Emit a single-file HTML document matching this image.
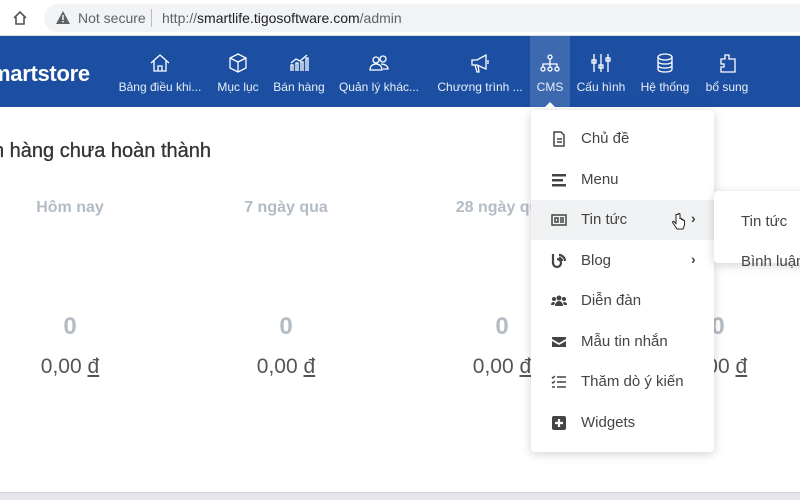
<!DOCTYPE html>
<html><head><meta charset="utf-8"><style>
*{margin:0;padding:0;box-sizing:border-box}
body{width:800px;height:500px;overflow:hidden;background:#fff;font-family:"Liberation Sans","DejaVu Sans",sans-serif;position:relative}
.top{position:absolute;left:0;top:0;width:800px;height:36px;background:#fff;border-bottom:1px solid #dadce0}
.pill{position:absolute;left:44px;top:4px;width:770px;height:28px;background:#f1f3f4;border-radius:14px}
.nav{position:absolute;left:0;top:36px;width:800px;height:71px;background:#1c4fa1;color:#fff}
.logo{position:absolute;left:-9px;top:25px;font-size:22px;font-weight:bold;letter-spacing:-.3px}
.it{position:absolute;top:0;height:71px;text-align:center;font-size:12px;color:#e8eef8}
.it svg{display:block;margin:16px auto 6px;width:22px;height:22px}
.it span{white-space:nowrap}
.active{background:#3d69b0}
.title{position:absolute;left:-7px;top:140px;font-size:20px;color:#333;-webkit-text-stroke:.3px #333}
.col{position:absolute;width:160px;text-align:center}
.lab{top:199px;font-size:16px;font-weight:bold;color:#b3bcc5}
.z{top:313px;font-size:24px;font-weight:bold;color:#b3bcc5}
.m{top:355px;font-size:21px;color:#555}
.m u{text-decoration:underline}
.menu{position:absolute;left:531px;top:110px;width:183px;height:342px;background:#fff;border-radius:4px;box-shadow:0 2px 10px rgba(0,0,0,.18)}
.mi{position:absolute;left:0;width:183px;height:40px;font-size:15px;color:#444}
.mi .ic{position:absolute;left:20px;top:12px;width:16px;height:16px}
.mi .t{position:absolute;left:50px;top:11px}
.mi .ar{position:absolute;left:160px;top:10px;font-size:14px;font-weight:bold}
.sub{position:absolute;left:714px;top:191px;width:100px;height:72px;background:#fff;border-radius:4px;box-shadow:0 2px 10px rgba(0,0,0,.18);font-size:15px;color:#444}
.bot{position:absolute;left:0;top:492px;width:800px;height:8px;background:#e4e6e9;border-top:1px solid #d0d3d7}
</style></head><body>
<div class="top">
<svg style="position:absolute;left:12px;top:10px" width="16" height="16" viewBox="0 0 16 16"><path d="M2 8L8 2l6 6M4 7v7h8V7" fill="none" stroke="#555" stroke-width="1.6"/></svg>
<div class="pill"></div>
<svg style="position:absolute;left:56px;top:11px" width="14" height="13" viewBox="0 0 14 13"><path d="M7 0L14 13H0z" fill="#5f6368"/><rect x="6.3" y="4" width="1.4" height="5" fill="#fff"/><rect x="6.3" y="10" width="1.4" height="1.4" fill="#fff"/></svg>
<div style="position:absolute;left:78px;top:10px;font-size:14px;color:#5f6368">Not secure</div>
<div style="position:absolute;left:151px;top:9px;width:1px;height:18px;background:#bbb"></div>
<div style="position:absolute;left:162px;top:10px;font-size:14px;color:#5f6368">http://<span style="color:#202124">smartlife.tigosoftware.com</span>/admin</div>
</div>
<div class="nav">
<div class="logo">martstore</div>
<div class="it" style="left:116px;width:88px"><svg viewBox="0 0 22 22" fill="none" stroke="#fff" stroke-width="1.3"><path d="M2 11L11 3l9 8M5 9v10h12V9M9 19v-5h4v5"/></svg><span>Bảng điều khi...</span></div>
<div class="it" style="left:214px;width:48px"><svg viewBox="0 0 22 22" fill="none" stroke="#fff" stroke-width="1.3"><path d="M11 2l8 4v10l-8 4-8-4V6zM3 6l8 4 8-4M11 10v10"/></svg><span>Mục lục</span></div>
<div class="it" style="left:272px;width:54px"><svg viewBox="0 0 22 22" fill="none" stroke="#fff" stroke-width="1.3"><path d="M3 19V13h2v6M8 19v-8h2v8M13 19v-9h2v9M18 19V6h2v13M3 11l5-4 4 2 7-6"/></svg><span>Bán hàng</span></div>
<div class="it" style="left:336px;width:86px"><svg viewBox="0 0 22 22" fill="none" stroke="#fff" stroke-width="1.3"><circle cx="8" cy="8" r="3"/><circle cx="15" cy="7" r="3"/><path d="M2 18c0-4 3-6 6-6s6 2 6 6zM13 12c4 0 7 2 7 5h-5"/></svg><span>Quản lý khác...</span></div>
<div class="it" style="left:436px;width:88px"><svg viewBox="0 0 22 22" fill="none" stroke="#fff" stroke-width="1.3"><path d="M3 8h5l9-5v14l-9-4H3zM6 13l2 7h2l-1-7M19 8v4"/></svg><span>Chương trình ...</span></div>
<div class="it active" style="left:530px;width:40px"><svg viewBox="0 0 22 22" fill="none" stroke="#fff" stroke-width="1.3"><circle cx="11" cy="5" r="2"/><circle cx="4" cy="17" r="2"/><circle cx="11" cy="17" r="2"/><circle cx="18" cy="17" r="2"/><path d="M11 7v8M4 15v-3h14v3"/></svg><span>CMS</span></div>
<div class="it" style="left:574px;width:54px"><svg viewBox="0 0 22 22" fill="none" stroke="#fff" stroke-width="1.3"><path d="M4 2v18M11 2v18M18 2v18"/><rect x="2" y="8" width="4" height="3"/><rect x="9" y="13" width="4" height="3"/><rect x="16" y="6" width="4" height="3"/></svg><span>Cấu hình</span></div>
<div class="it" style="left:636px;width:58px"><svg viewBox="0 0 22 22" fill="none" stroke="#fff" stroke-width="1.3"><ellipse cx="11" cy="5" rx="7" ry="3"/><path d="M4 5v12c0 2 3 3 7 3s7-1 7-3V5M4 9c0 2 3 3 7 3s7-1 7-3M4 13c0 2 3 3 7 3s7-1 7-3"/></svg><span>Hệ thống</span></div>
<div class="it" style="left:700px;width:54px"><svg viewBox="0 0 22 22" fill="none" stroke="#fff" stroke-width="1.3"><path d="M9 3h4v4h6v13H5v-5h3v-3H5V7h4z"/></svg><span>bổ sung</span></div>
<div style="position:absolute;left:543px;top:66px;border:7px solid transparent;border-bottom-color:#fff;border-top:0"></div>
</div>
<div class="title">n hàng chưa hoàn thành</div>
<div class="col lab" style="left:-10px">Hôm nay</div>
<div class="col lab" style="left:206px">7 ngày qua</div>
<div class="col lab" style="left:422px">28 ngày qua</div>
<div class="col z" style="left:-10px">0</div><div class="col z" style="left:206px">0</div><div class="col z" style="left:422px">0</div><div class="col z" style="left:638px">0</div>
<div class="col m" style="left:-10px">0,00 <u>đ</u></div><div class="col m" style="left:206px">0,00 <u>đ</u></div><div class="col m" style="left:422px">0,00 <u>đ</u></div><div class="col m" style="left:638px">0,00 <u>đ</u></div>
<div class="menu">
<div class="mi" style="top:9px"><svg class="ic" viewBox="0 0 16 16" fill="none" stroke="#444" stroke-width="1.5"><path d="M3 1h7l3 3v11H3zM6 8h5M6 11h5"/></svg><span class="t">Chủ đề</span></div>
<div class="mi" style="top:50px"><svg class="ic" viewBox="0 0 16 16" fill="#444"><rect x="1" y="2" width="14" height="2.5"/><rect x="1" y="7" width="11" height="2.5"/><rect x="1" y="12" width="14" height="2.5"/></svg><span class="t">Menu</span></div>
<div class="mi" style="top:90px;background:#f1f2f4"><svg class="ic" viewBox="0 0 16 16" fill="none" stroke="#444" stroke-width="1.5"><rect x="1" y="3" width="14" height="10"/><path d="M4 6h3v4H4zM9 6h4M9 8h4M9 10h4"/></svg><span class="t">Tin tức</span><svg style="position:absolute;left:141px;top:13px" width="13" height="18" viewBox="0 0 13 18"><path d="M4 1.5v9l-2-2c-1-.5-2 .5-1 1.5l4 6h6l1.5-4v-4c0-1-1.5-1-1.5 0v-1c0-1-1.5-1-1.5 0v-1c0-1-1.5-1-1.5 0V1.5c0-1.3-2-1.3-2 0z" fill="#fff" stroke="#222" stroke-width="1"/></svg><span class="ar">›</span></div>
<div class="mi" style="top:131px"><svg class="ic" viewBox="0 0 16 16" fill="none" stroke="#444" stroke-width="2.2"><path d="M2 1v9a4 4 0 1 0 4-4M8 2a6 6 0 0 1 6 6M8 5a3 3 0 0 1 3 3"/></svg><span class="t">Blog</span><span class="ar">›</span></div>
<div class="mi" style="top:171px"><svg class="ic" viewBox="0 0 16 16" fill="#444"><circle cx="8" cy="5" r="2.5"/><circle cx="3" cy="6" r="2"/><circle cx="13" cy="6" r="2"/><path d="M4 13c0-3 2-5 4-5s4 2 4 5zM0 12c0-2 1-3 3-3l1 1-1 2zM16 12c0-2-1-3-3-3l-1 1 1 2z"/></svg><span class="t">Diễn đàn</span></div>
<div class="mi" style="top:212px"><svg class="ic" viewBox="0 0 16 16" fill="#444"><path d="M1 3h14v2l-7 4-7-4zM1 7l7 4 7-4v6H1z"/></svg><span class="t">Mẫu tin nhắn</span></div>
<div class="mi" style="top:252px"><svg class="ic" viewBox="0 0 16 16" fill="none" stroke="#444" stroke-width="1.4"><path d="M1 3l1 1 2-2M1 8l1 1 2-2M1 13h3M6 3h9M6 8h9M6 13h9"/></svg><span class="t">Thăm dò ý kiến</span></div>
<div class="mi" style="top:293px"><svg class="ic" viewBox="0 0 16 16"><rect x="1" y="1" width="14" height="14" rx="2" fill="#444"/><path d="M8 4v8M4 8h8" stroke="#fff" stroke-width="2.2"/></svg><span class="t">Widgets</span></div>
</div>
<div class="sub"><div style="position:absolute;left:27px;top:22px">Tin tức</div><div style="position:absolute;left:27px;top:62px;white-space:nowrap">Bình luận</div></div>
<div class="bot"></div>
</body></html>
